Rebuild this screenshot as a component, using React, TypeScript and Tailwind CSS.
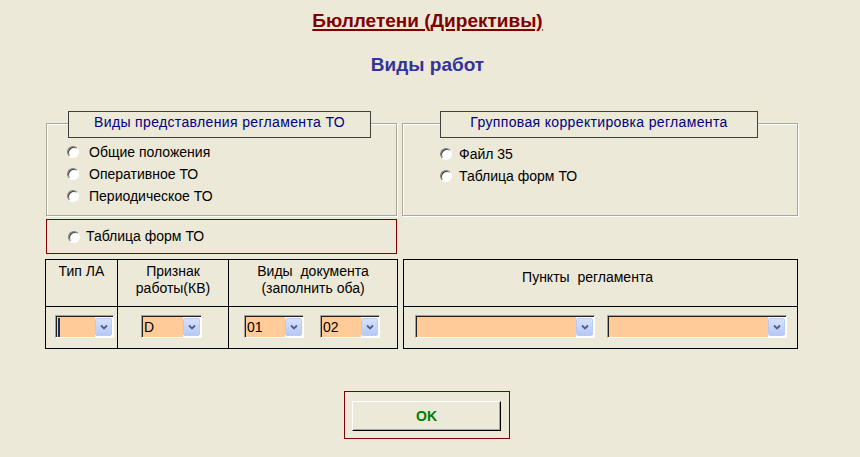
import React from 'react';

const font = { fontFamily: '"Liberation Sans", Arial, sans-serif' };

function Radio() {
  return (
    <span className="inline-block w-[12px] h-[12px] shrink-0 rounded-full bg-white border border-[#808080] border-r-white border-b-white shadow-[inset_1px_1px_0_#404040]" />
  );
}

function RadioRow({ label, gap = 'gap-[10px]' }: { label: string; gap?: string }) {
  return (
    <div className={`flex h-[22px] items-center ${gap} text-[14px] text-black`}>
      <Radio />
      <span>{label}</span>
    </div>
  );
}

function Legend({ text, className }: { text: string; className: string }) {
  return (
    <div
      className={`-mt-[13px] h-[27px] border border-[#404040] bg-[#ECE9D8] pt-[2px] text-center text-[14px] leading-[17px] tracking-[0.35px] text-[#000080] ${className}`}
    >
      {text}
    </div>
  );
}

function Combo({ width, value, caret }: { width: string; value?: string; caret?: boolean }) {
  return (
    <div className={`flex h-[23px] border border-[#a0a0a0] border-r-white border-b-white ${width}`}>
      <div className="flex flex-1 border-l border-t border-[#202020]">
        <div className="flex flex-1 items-center bg-[#FFCC99] pl-[1px] text-[14px] leading-none text-black">
          {caret && <span className="h-[19px] w-[2px] bg-[#1c3161]" />}
          {value}
        </div>
        <div className="flex bg-white py-[1px] pr-[1px]">
          <div className="flex w-[17px] items-center justify-center rounded-[2px] border border-[#b9cbf5] bg-linear-to-b from-[#d6e1fc] to-[#b6c9f6]">
            <svg width="8" height="6" viewBox="0 0 8 6">
              <path d="M1 1.5 L4 4.5 L7 1.5" fill="none" stroke="#4d6185" strokeWidth="1.8" />
            </svg>
          </div>
        </div>
      </div>
    </div>
  );
}

export default function App() {
  return (
    <div className="w-[860px] h-[457px] bg-[#ECE9D8] overflow-hidden" style={font}>
      <div className="w-[855px] pt-[9px] text-center">
        <span className="text-[19px] font-bold leading-[23px] text-[#800000] underline decoration-2 underline-offset-2">
          Бюллетени (Директивы)
        </span>
      </div>
      <div className="w-[855px] mt-[19px] text-center text-[19px] font-bold leading-[23px] text-[#333399]">
        Виды работ
      </div>

      <div className="ml-[45px] mt-[47px] w-[753px]">
        <div className="flex items-start">
          <div className="w-[353px]">
            <div className="mx-[1px] h-[93px] border border-[#aca899] shadow-[inset_1px_1px_0_#fff,1px_1px_0_#fff]">
              <Legend text="Виды представления регламента ТО" className="ml-[21px] w-[303px]" />
              <div className="mt-[3px] pl-[20px]">
                <RadioRow label="Общие положения" />
                <RadioRow label="Оперативное ТО" />
                <RadioRow label="Периодическое ТО" />
              </div>
            </div>
            <div className="mx-[1px] mt-[3px] flex h-[35px] items-center border border-[#800000] pl-[21px]">
              <RadioRow label="Таблица форм ТО" gap="gap-[6px]" />
            </div>
          </div>
          <div className="ml-[4px] w-[396px] h-[93px] border border-[#aca899] shadow-[inset_1px_1px_0_#fff,1px_1px_0_#fff]">
            <Legend text="Групповая корректировка регламента" className="ml-[37px] w-[318px]" />
            <div className="mt-[5px] pl-[37px]">
              <RadioRow label="Файл 35" gap="gap-[7px]" />
              <RadioRow label="Таблица форм ТО" gap="gap-[7px]" />
            </div>
          </div>
        </div>

        <div className="mt-[5px] flex items-start">
          <div className="w-[353px] border border-black text-[14px] leading-[17px] text-black">
            <div className="flex h-[47px] border-b border-black">
              <div className="w-[72px] border-r border-black pt-[3px] text-center">Тип ЛА</div>
              <div className="w-[111px] border-r border-black pt-[3px] text-center">
                Признак
                <br />
                работы(КВ)
              </div>
              <div className="flex-1 pt-[3px] text-center whitespace-pre">
                {'Виды  документа\n(заполнить оба)'}
              </div>
            </div>
            <div className="flex h-[41px]">
              <div className="w-[72px] border-r border-black pl-[9px] pt-[8px]">
                <Combo width="w-[59px]" caret />
              </div>
              <div className="w-[111px] border-r border-black pl-[23px] pt-[8px]">
                <Combo width="w-[61px]" value="D" />
              </div>
              <div className="flex flex-1 gap-[16px] pl-[15px] pt-[8px]">
                <Combo width="w-[60px]" value="01" />
                <Combo width="w-[60px]" value="02" />
              </div>
            </div>
          </div>
          <div className="ml-[5px] w-[395px] border border-black text-[14px] leading-[17px] text-black">
            <div className="h-[47px] border-b border-black pr-[26px] pt-[9px] text-center whitespace-pre">
              {'Пункты  регламента'}
            </div>
            <div className="flex h-[41px] gap-[12px] pl-[11px] pt-[8px]">
              <Combo width="w-[180px]" />
              <Combo width="w-[180px]" />
            </div>
          </div>
        </div>

        <div className="ml-[299px] mt-[42px] h-[48px] w-[166px] border border-[#800000] pl-[7px] pt-[9px]">
          <div className="flex h-[30px] w-[149px] items-center justify-center border border-white border-r-black border-b-black shadow-[inset_-1px_-1px_0_#aca899] text-[14px] font-bold text-[#008000]">
            OK
          </div>
        </div>
      </div>
    </div>
  );
}
